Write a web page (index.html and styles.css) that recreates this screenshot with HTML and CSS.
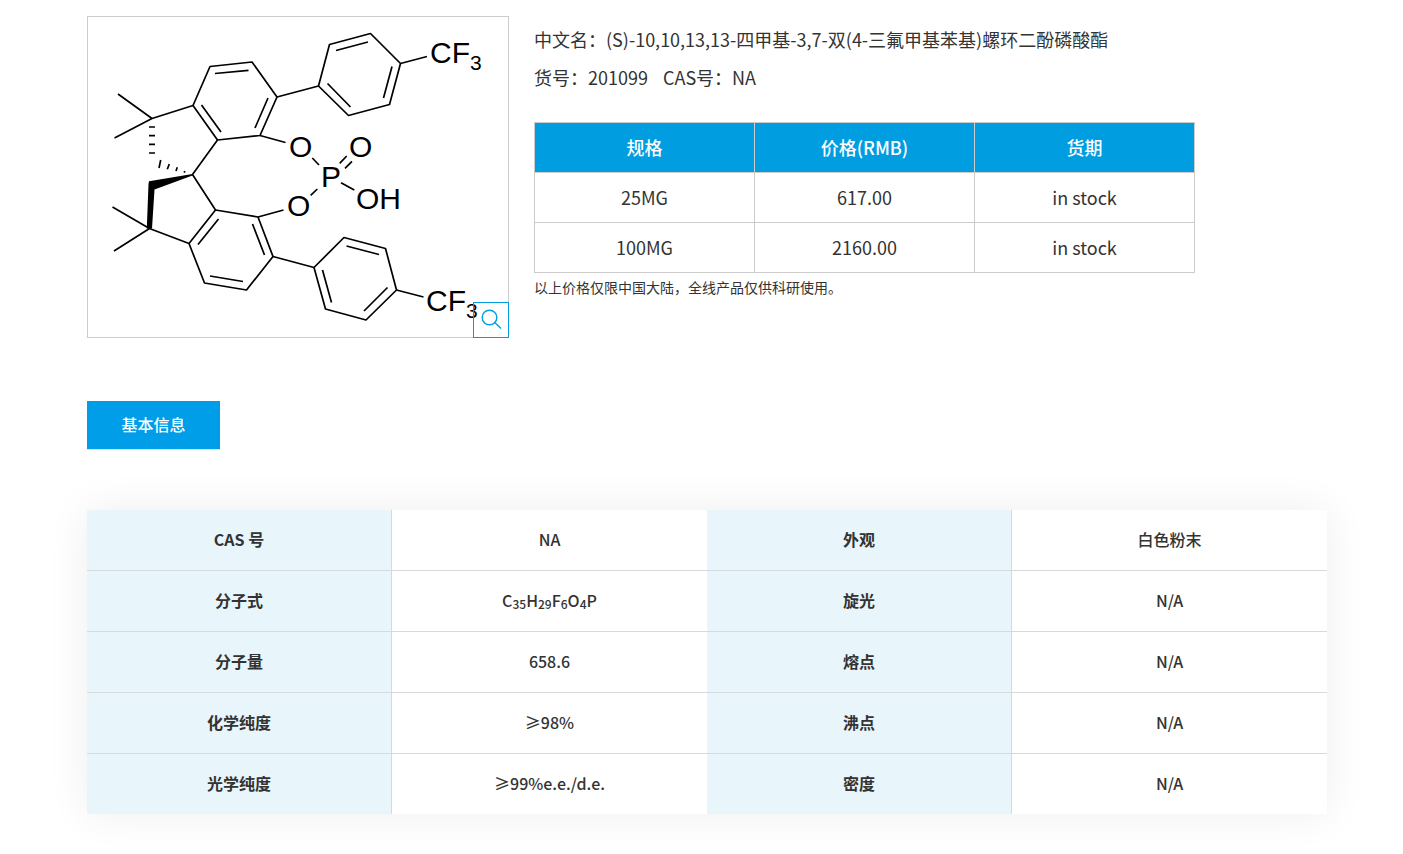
FILE: index.html
```html
<!DOCTYPE html>
<html lang="zh-CN">
<head>
    <meta charset="UTF-8">
    <meta name="viewport" content="width=device-width, initial-scale=1.0">
    <title>产品详情</title>
    <link rel="stylesheet" href="styles.css">
</head>
<body>
    <div class="container">
        <!-- 产品图片和价格 -->
        <div class="product">
            <div class="pic">
                <svg class="structure" viewBox="88 17 420 320" role="img" aria-label="结构式">
                    <!-- 单键和环 -->
                    <g class="bond">
                        <path d="M118 94L152 118.500L114.500 138M152 118.500L193 105.500"/>
                        <path d="M193 105.500L210 66.500L252 62L277 97L260 135.500L217.500 140Z"/>
                        <path d="M215 73.500L248.500 70.300M268 98L255 128M201.500 105L221 132"/>
                        <path d="M277 97L318.500 86M260 135.500L285.500 142.500M217.500 140L192.500 174.500L215.500 210"/>
                        <path d="M318.500 86L329.500 44.500L370.500 33.500L400.500 63.500L389.500 104.500L348.500 115.500Z"/>
                        <path d="M336 50.500L368 42M392 66.500L383.500 98M327.500 83.500L350.500 107M400.500 63.500L427 56.500"/>
                        <path d="M312.300 158L319 165M339.700 163.300L346.700 156M345 168.300L352 161.300M341 182.700L354.300 190M310.700 195.300L317.300 189"/>
                        <path d="M112.500 207L149.500 228.500L114 251M149.500 228.500L189 243.500"/>
                        <path d="M189 243.500L215.500 210L258 217L273 256.500L246.500 290L204.500 283Z"/>
                        <path d="M218.500 219L198 244.500M252.500 224L264.500 255M210 276L243 281.500"/>
                        <path d="M258 217L283.500 210M273 256.500L314 267.500"/>
                        <path d="M314 267.500L344 237.500L385.500 248.500L396.500 290L366 320L325.500 309Z"/>
                        <path d="M346.500 246L379 254.500M322.500 270L331.500 302.500M387.500 287.500L364 311M396.500 290L423.500 297"/>
                        <!-- 虚楔形键 -->
                        <path d="M149 127H155M149 135.700H155M149 144.300H155M149 153H155M160.700 160L159 168M169.300 164L167.300 169.300M177.300 167.300L176 171M184.800 171L184.200 172.600"/>
                    </g>
                    <!-- 实楔形键 -->
                    <path d="M192.500 174L149 181.200L148.500 184L146.800 228.500H152L154.500 189.500L192.500 175.500Z"/>
                    <g class="atom">
                        <text x="430" y="63">CF</text>
                        <text x="289" y="157">O</text>
                        <text x="349" y="157">O</text>
                        <text x="321" y="187">P</text>
                        <text x="356" y="209">OH</text>
                        <text x="287" y="216">O</text>
                        <text x="426" y="311">CF</text>
                    </g>
                    <g class="atom-sub">
                        <text x="470" y="70">3</text>
                        <text x="466" y="318">3</text>
                    </g>
                </svg>
                <button class="zoom-btn" type="button" aria-label="放大">
                    <svg viewBox="0 0 34 34">
                        <circle cx="15.500" cy="14.500" r="7.300"/>
                        <path d="M20.800 19.500L27 25.500"/>
                    </svg>
                </button>
            </div>
            <div class="detail">
                <p>中文名：(S)-10,10,13,13-四甲基-3,7-双(4-三氟甲基苯基)螺环二酚磷酸酯</p>
                <p><span class="number">货号：201099</span><span>CAS号：NA</span></p>
                <table class="price">
                    <thead>
                        <tr>
                            <th>规格</th>
                            <th>价格(RMB)</th>
                            <th>货期</th>
                        </tr>
                    </thead>
                    <tbody>
                        <tr>
                            <td>25MG</td>
                            <td>617.00</td>
                            <td>in stock</td>
                        </tr>
                        <tr>
                            <td>100MG</td>
                            <td>2160.00</td>
                            <td>in stock</td>
                        </tr>
                    </tbody>
                </table>
                <div class="note">以上价格仅限中国大陆，全线产品仅供科研使用。</div>
            </div>
        </div>

        <!-- 选项卡 -->
        <div class="tabs">
            <a class="active" href="#info">基本信息</a>
        </div>

        <!-- 基本信息 -->
        <table class="info" id="info">
            <tr>
                <th>CAS 号</th>
                <td>NA</td>
                <th>外观</th>
                <td>白色粉末</td>
            </tr>
            <tr>
                <th>分子式</th>
                <td>C<sub>35</sub>H<sub>29</sub>F<sub>6</sub>O<sub>4</sub>P</td>
                <th>旋光</th>
                <td>N/A</td>
            </tr>
            <tr>
                <th>分子量</th>
                <td>658.6</td>
                <th>熔点</th>
                <td>N/A</td>
            </tr>
            <tr>
                <th>化学纯度</th>
                <td>≥98%</td>
                <th>沸点</th>
                <td>N/A</td>
            </tr>
            <tr>
                <th>光学纯度</th>
                <td>≥99%e.e./d.e.</td>
                <th>密度</th>
                <td>N/A</td>
            </tr>
        </table>
    </div>
</body>
</html>
```
FILE: styles.css
```css
*{
    margin: 0;
    padding: 0;
    box-sizing: border-box;
}
body{
    font-family: "Noto Sans CJK SC", sans-serif;
    font-size: 16px;
    color: #333;
    background-color: #fff;
}
a{
    text-decoration: none;
}
.container{
    padding: 16px 76px 40px 87px;
}
/*产品*/
.product{
    display: flex;
    gap: 25px;
}
.pic{
    /*放大按钮相对它定位*/
    position: relative;
    flex: none;
    width: 422px;
    border: 1px solid #ccc;
}
.structure{
    display: block;
    width: 100%;
}
.bond{
    fill: none;
    stroke: #000;
    stroke-width: 1.7px;
    stroke-linejoin: round;
}
.atom{
    font-family: "Liberation Sans", Arial, sans-serif;
    font-size: 30px;
}
.atom-sub{
    font-family: "Liberation Sans", Arial, sans-serif;
    font-size: 21px;
}
.zoom-btn{
    position: absolute;
    right: -1px;
    bottom: -1px;
    width: 36px;
    height: 36px;
    border: 1px solid #009de1;
    background: none;
    cursor: pointer;
}
.zoom-btn svg{
    display: block;
    fill: none;
    stroke: #009de1;
    stroke-width: 1.4px;
}
.detail{
    flex: 1;
    padding-top: 4px;
    font-size: 18px;
}
.detail p{
    line-height: 38px;
}
.number{
    margin-right: 15px;
}
/*价格表*/
.price{
    width: 100%;
    max-width: 661px;
    margin-top: 26px;
    border-collapse: collapse;
    table-layout: fixed;
    text-align: center;
}
.price th,
.price td{
    height: 50px;
    padding-bottom: 2px;
    border: 1px solid #ccc;
}
.price th{
    font-weight: 500;
    color: #fff;
    background-color: #009de1;
}
.note{
    font-size: 14px;
    line-height: 28px;
}
/*选项卡*/
.tabs{
    display: flex;
    margin-top: 63px;
}
.tabs .active{
    min-width: 133px;
    padding-bottom: 2px;
    border-bottom: 1px solid #d5e5ee;
    line-height: 46px;
    font-weight: 500;
    text-align: center;
    color: #fff;
    background-color: #009de9;
}
/*基本信息表*/
.info{
    width: 100%;
    margin-top: 60px;
    border-spacing: 0;
    table-layout: fixed;
    text-align: center;
    box-shadow: 0 0 40px rgba(0, 0, 0, 0.07);
}
.info th,
.info td{
    height: 61px;
    padding-bottom: 2px;
    border-bottom: 1px solid #d6d9dd;
}
.info th{
    width: 305px;
    border-right: 1px solid #d6d9dd;
    background-color: #e8f5fb;
}
.info td{
    font-weight: 500;
    background-color: #fff;
}
.info tr:last-child th,
.info tr:last-child td{
    height: 60px;
    border-bottom: none;
}
.info sub{
    font-size: 12px;
    line-height: 1;
    vertical-align: -2px;
}
```
